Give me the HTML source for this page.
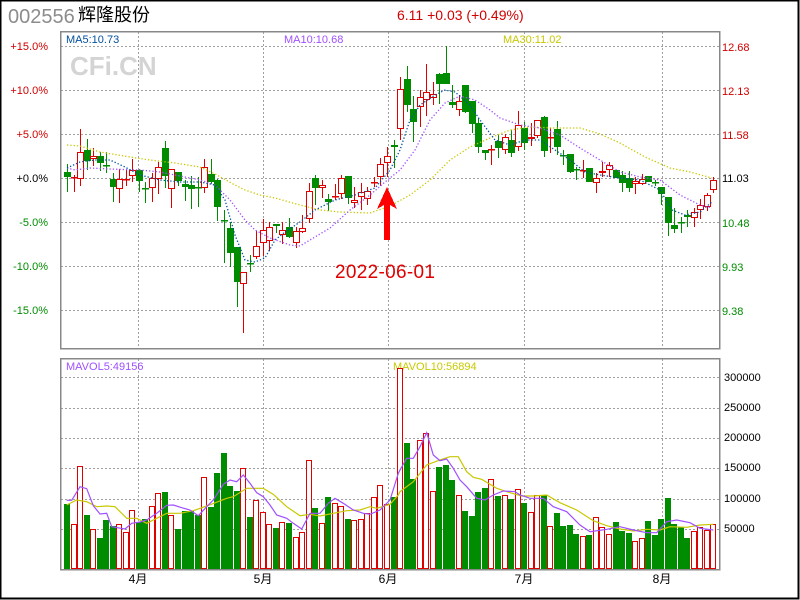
<!DOCTYPE html>
<html><head><meta charset="utf-8"><style>
html,body{margin:0;padding:0;background:#fff;width:800px;height:600px;overflow:hidden}
svg{display:block}
text{font-family:"Liberation Sans","Noto Sans CJK SC",sans-serif}
</style></head><body>
<svg id="s" width="800" height="600" xmlns="http://www.w3.org/2000/svg" shape-rendering="crispEdges">
<rect x="0.5" y="0.5" width="798" height="598" fill="#fff" stroke="#000" stroke-width="2"/>
<text x="8" y="23" font-size="20" fill="#8c8c8c">002556</text>
<text x="78" y="21" font-size="18" fill="#000" font-family="Noto Sans CJK SC,sans-serif">辉隆股份</text>
<text x="397" y="20" font-size="14" fill="#d00000" font-family="Liberation Mono,monospace">6.11 +0.03 (+0.49%)</text>
<text x="70" y="75" font-size="26" font-weight="bold" fill="#d4d4d4">CFi.CN</text>
<g id="grid" stroke="#a0a0a0" stroke-dasharray="2,2" stroke-width="1"></g>
<rect x="60.5" y="31.5" width="659" height="317" fill="none" stroke="#888" stroke-width="1.5"/>
<rect x="60.5" y="358.5" width="659" height="211" fill="none" stroke="#888" stroke-width="1.5"/>
<g font-size="11" font-family="Liberation Mono,monospace">
<text x="66" y="43" fill="#00509f">MA5:10.73</text>
<text x="284" y="43" fill="#a050ff">MA10:10.68</text>
<text x="503" y="43" fill="#c8c800">MA30:11.02</text>
<text x="66" y="370" fill="#a050ff">MAVOL5:49156</text>
<text x="393" y="370" fill="#c8c800">MAVOL10:56894</text>
</g>
<g font-size="11" text-anchor="end">
<text x="48" y="50" fill="#d00000">+15.0%</text>
<text x="48" y="94" fill="#d00000">+10.0%</text>
<text x="48" y="138" fill="#d00000">+5.0%</text>
<text x="48" y="182" fill="#000">+0.0%</text>
<text x="48" y="226" fill="#008c00">-5.0%</text>
<text x="48" y="270" fill="#008c00">-10.0%</text>
<text x="48" y="314" fill="#008c00">-15.0%</text>
</g>
<g font-size="11">
<text x="722" y="51" fill="#d00000">12.68</text>
<text x="722" y="95" fill="#d00000">12.13</text>
<text x="722" y="139" fill="#d00000">11.58</text>
<text x="722" y="182" fill="#000">11.03</text>
<text x="722" y="227" fill="#008c00">10.48</text>
<text x="722" y="271" fill="#008c00">9.93</text>
<text x="722" y="315" fill="#008c00">9.38</text>
<text x="724" y="381" fill="#000">300000</text>
<text x="724" y="411" fill="#000">250000</text>
<text x="724" y="441" fill="#000">200000</text>
<text x="724" y="471" fill="#000">150000</text>
<text x="724" y="502" fill="#000">100000</text>
<text x="724" y="532" fill="#000">50000</text>
</g>
<g font-size="12" fill="#000" text-anchor="middle" font-family="Liberation Sans,Noto Sans CJK SC,sans-serif">
<text x="138" y="583">4月</text><text x="263" y="583">5月</text><text x="388" y="583">6月</text><text x="524" y="583">7月</text><text x="662" y="583">8月</text>
</g>
<g id="vol"></g><g id="cdl"></g><g id="ma" shape-rendering="auto"></g>
<polygon points="387,187 377,209 384,205 384,240 390,240 390,205 397,209" fill="#ff0000"/>
<text x="335" y="278" font-size="19" fill="#e00000" textLength="100" font-family="Liberation Sans,sans-serif">2022-06-01</text>
</svg>
<script>
var NS="http://www.w3.org/2000/svg";
function el(p,t,a){var e=document.createElementNS(NS,t);for(var k in a)e.setAttribute(k,a[k]);p.appendChild(e);return e;}
var g=document.getElementById("grid");
[46,90,134,178,222,266,310].forEach(function(y){el(g,"line",{x1:61,x2:719,y1:y+.5,y2:y+.5});});
[377,408,438,468,499,529].forEach(function(y){el(g,"line",{x1:61,x2:719,y1:y+.5,y2:y+.5});});
[138,263,388,524,662].forEach(function(x){el(g,"line",{x1:x+.5,x2:x+.5,y1:32,y2:348});el(g,"line",{x1:x+.5,x2:x+.5,y1:359,y2:569});});
var V="g504 r524 r466 g515 r529 g538 g520 g526 r524 r532 r510 g522 g519 r506 r493 g492 r515 g529 g511 g511 g515 r477 g507 g473 g453 g486 g491 r468 g517 r500 r512 r524 g528 r522 g523 r537 r532 r460 g508 r523 g497 r503 r506 g519 r520 r519 r513 r497 r485 r504 g497 r368 g443 g479 r440 r433 r491 g467 g465 g480 r495 g511 g516 g492 g488 r479 g496 r495 g499 r489 g503 r512 r495 g495 r526 g513 g526 g525 g534 r536 g535 r517 r527 r534 g522 g531 g533 r541 r538 g521 g535 g519 g498 g524 g527 g538 r531 r527 r530 r524".split(" ");
var vg=document.getElementById("vol");
V.forEach(function(s,i){var x=Math.round(67+6.53*i)-3,y=+s.slice(1);
if(s[0]=="g")el(vg,"rect",{x:x,y:y,width:6,height:569-y,fill:"#008c00"});
else el(vg,"rect",{x:x+.5,y:y+.5,width:5,height:568-y,fill:"#fff",stroke:"#e00000"});});
var C=[["g",172,177,164,192],["r",177,177,175,192],["r",152,179,129,186],["g",150,161,139,170],["r",156,159,148,166],["g",156,163,152,171],["g",165,165,152,173],["g",179,187,173,202],["r",179,189,169,203],["r",179,179,169,186],["r",170,176,159,182],["g",170,181,169,192],["g",188,188,182,203],["r",178,188,173,202],["r",167,179,162,194],["g",148,176,141,188],["r",169,189,169,208],["g",172,181,172,186],["g",184,187,180,201],["g",185,189,176,209],["g",187,187,177,207],["r",167,188,159,193],["g",174,182,159,184],["g",180,207,179,221],["g",220,220,210,263],["g",228,253,222,267],["g",247,282,247,307],["r",272,284,272,333],["g",263,263,255,272],["r",246,257,231,259],["r",230,243,219,256],["r",227,241,222,251],["g",224,226,224,233],["r",230,235,222,244],["g",227,237,218,238],["r",231,243,227,248],["r",228,232,215,233],["r",191,219,183,223],["g",178,188,175,205],["r",185,188,180,198],["g",199,202,194,211],["r",196,196,184,200],["r",178,194,175,199],["g",176,198,176,204],["r",200,203,187,208],["r",192,197,183,210],["r",191,199,187,205],["r",182,182,177,187],["r",164,177,158,186],["r",156,163,147,177],["g",145,147,140,168],["r",89,129,77,140],["g",79,105,66,112],["g",109,122,96,142],["r",97,107,90,127],["r",92,100,64,116],["r",94,98,82,105],["g",74,84,73,104],["g",73,84,46,84],["g",102,105,85,108],["r",101,110,95,116],["g",85,112,85,113],["g",101,124,101,133],["g",123,147,118,153],["g",150,153,150,160],["r",149,149,145,165],["g",141,148,135,158],["r",137,150,134,154],["g",140,153,130,157],["r",125,147,111,151],["g",128,143,122,150],["r",137,139,123,146],["r",120,136,120,138],["g",117,151,116,157],["r",137,137,128,153],["g",129,147,121,155],["g",155,155,150,165],["g",154,172,154,173],["g",169,169,167,180],["r",170,170,160,178],["g",168,182,168,182],["r",178,183,173,193],["r",171,173,162,177],["r",165,170,162,177],["g",170,178,170,178],["g",175,183,171,192],["g",178,188,171,192],["r",181,184,177,194],["r",179,184,174,185],["g",176,182,176,182],["g",182,183,180,186],["g",187,194,187,205],["g",197,223,197,236],["g",225,229,208,233],["g",222,222,217,233],["g",215,217,210,227],["r",212,218,208,227],["r",205,210,199,219],["r",195,207,193,211],["r",180,190,177,193]];
var cg=document.getElementById("cdl");
C.forEach(function(c,i){var x=Math.round(67+6.53*i),t=c[1],b=c[2],h=c[3],l=c[4];
var col=c[0]=="g"?"#008c00":"#e00000";
el(cg,"rect",{x:x,y:h,width:1,height:Math.max(1,l-h),fill:col});
if(b-t<2){el(cg,"rect",{x:x-3,y:t,width:7,height:1.5,fill:col});}
else if(c[0]=="g")el(cg,"rect",{x:x-3,y:t,width:7,height:b-t,fill:col});
else el(cg,"rect",{x:x-2.5,y:t+.5,width:6,height:b-t-1,fill:"#fff",stroke:col,"stroke-width":1.3});});
var mg=document.getElementById("ma");
function pl(pts,col,dash,w){el(mg,"polyline",{points:pts,fill:"none",stroke:col,"stroke-width":w||1.3,"stroke-dasharray":dash||"none"});}
pl("67,145 80,146 100,152 130,157 150,160 175,163 200,167 215,174 235,185 245,190 260,195 275,198 300,205 320,210 340,212 370,213 390,206 410,195 430,180 450,160 470,147 490,138 510,130 530,127 555,128 580,128 600,134 620,143 645,157 670,168 690,172 712,178","#c8c800","1.3,2");
pl("67,168 75,170 90,168 110,169 140,170 160,172 180,176 200,180 215,185 230,200 245,220 255,230 270,238 290,245 300,246 310,240 330,228 350,210 370,195 385,182 400,170 415,150 430,120 445,103 460,96 475,100 490,110 500,118 520,125 540,128 560,135 580,148 600,160 620,172 640,177 660,180 680,195 700,205 712,208","#a050ff","1.3,2");
pl("67,168 80,162 95,160 110,160 125,167 140,175 160,180 180,182 200,182 215,185 225,200 235,235 245,260 255,262 265,258 275,240 285,232 300,222 315,210 335,200 355,195 375,188 390,170 400,150 410,120 420,105 435,95 445,90 455,92 470,105 480,120 495,140 510,145 525,140 540,140 555,150 570,160 585,172 600,175 620,178 640,180 660,190 672,210 685,215 700,212 712,202","#00509f","1.3,2");
function cv(a,ox){return a.map(function(p){return (ox+p[0]/3).toFixed(1)+","+(340+p[1]/3).toFixed(1);}).join(" ");}
var p1=[[200,481],[215,481],[240,440],[260,446],[280,497],[300,522],[320,520],[335,560],[375,567],[395,550],[420,546],[440,540],[470,520],[500,496],[520,495],[545,503],[570,510],[595,527],[620,500],[640,480],[670,433],[690,420],[710,425],[730,405],[750,430],[770,458],[790,470],[810,495],[830,525],[860,535],[880,550],[905,567],[930,520],[960,520],[985,490],[1005,475],[1030,490],[1060,510],[1090,520],[1110,523],[1140,510],[1170,480],[1195,400]];
var p2=[[0,390],[20,355],[40,355],[60,320],[80,278],[100,345],[120,362],[140,357],[160,385],[180,420],[200,440],[230,475],[255,480],[280,465],[310,453],[345,455],[360,465],[390,475],[430,475],[460,500],[500,515],[540,555],[570,575],[620,568],[660,560],[700,570],[740,578],[770,578],[800,545],[830,540],[870,548],[900,565],[940,570]];
var y1=[[200,495],[230,480],[260,485],[290,500],[320,498],[345,500],[380,535],[410,535],[440,550],[470,535],[500,520],[540,520],[580,512],[620,498],[680,475],[700,470],[740,445],[790,445],[820,463],[860,500],[900,527],[930,523],[960,528],[1000,520],[1040,512],[1080,510],[1110,500],[1130,505],[1170,493],[1195,465]];
var y2=[[0,455],[40,425],[80,375],[120,360],[150,350],[175,350],[200,395],[220,412],[245,418],[290,445],[330,458],[365,468],[400,468],[440,465],[480,488],[530,510],[580,542],[620,557],[660,567],[700,573],[740,568],[780,570],[810,560],[860,562],[900,555],[940,553]];
pl(cv(y1,0)+" "+cv(y2,400),"#c8c800",null,1.2);
pl(cv(p1,0)+" "+cv(p2,400),"#a050ff",null,1.2);
</script>
</body></html>
